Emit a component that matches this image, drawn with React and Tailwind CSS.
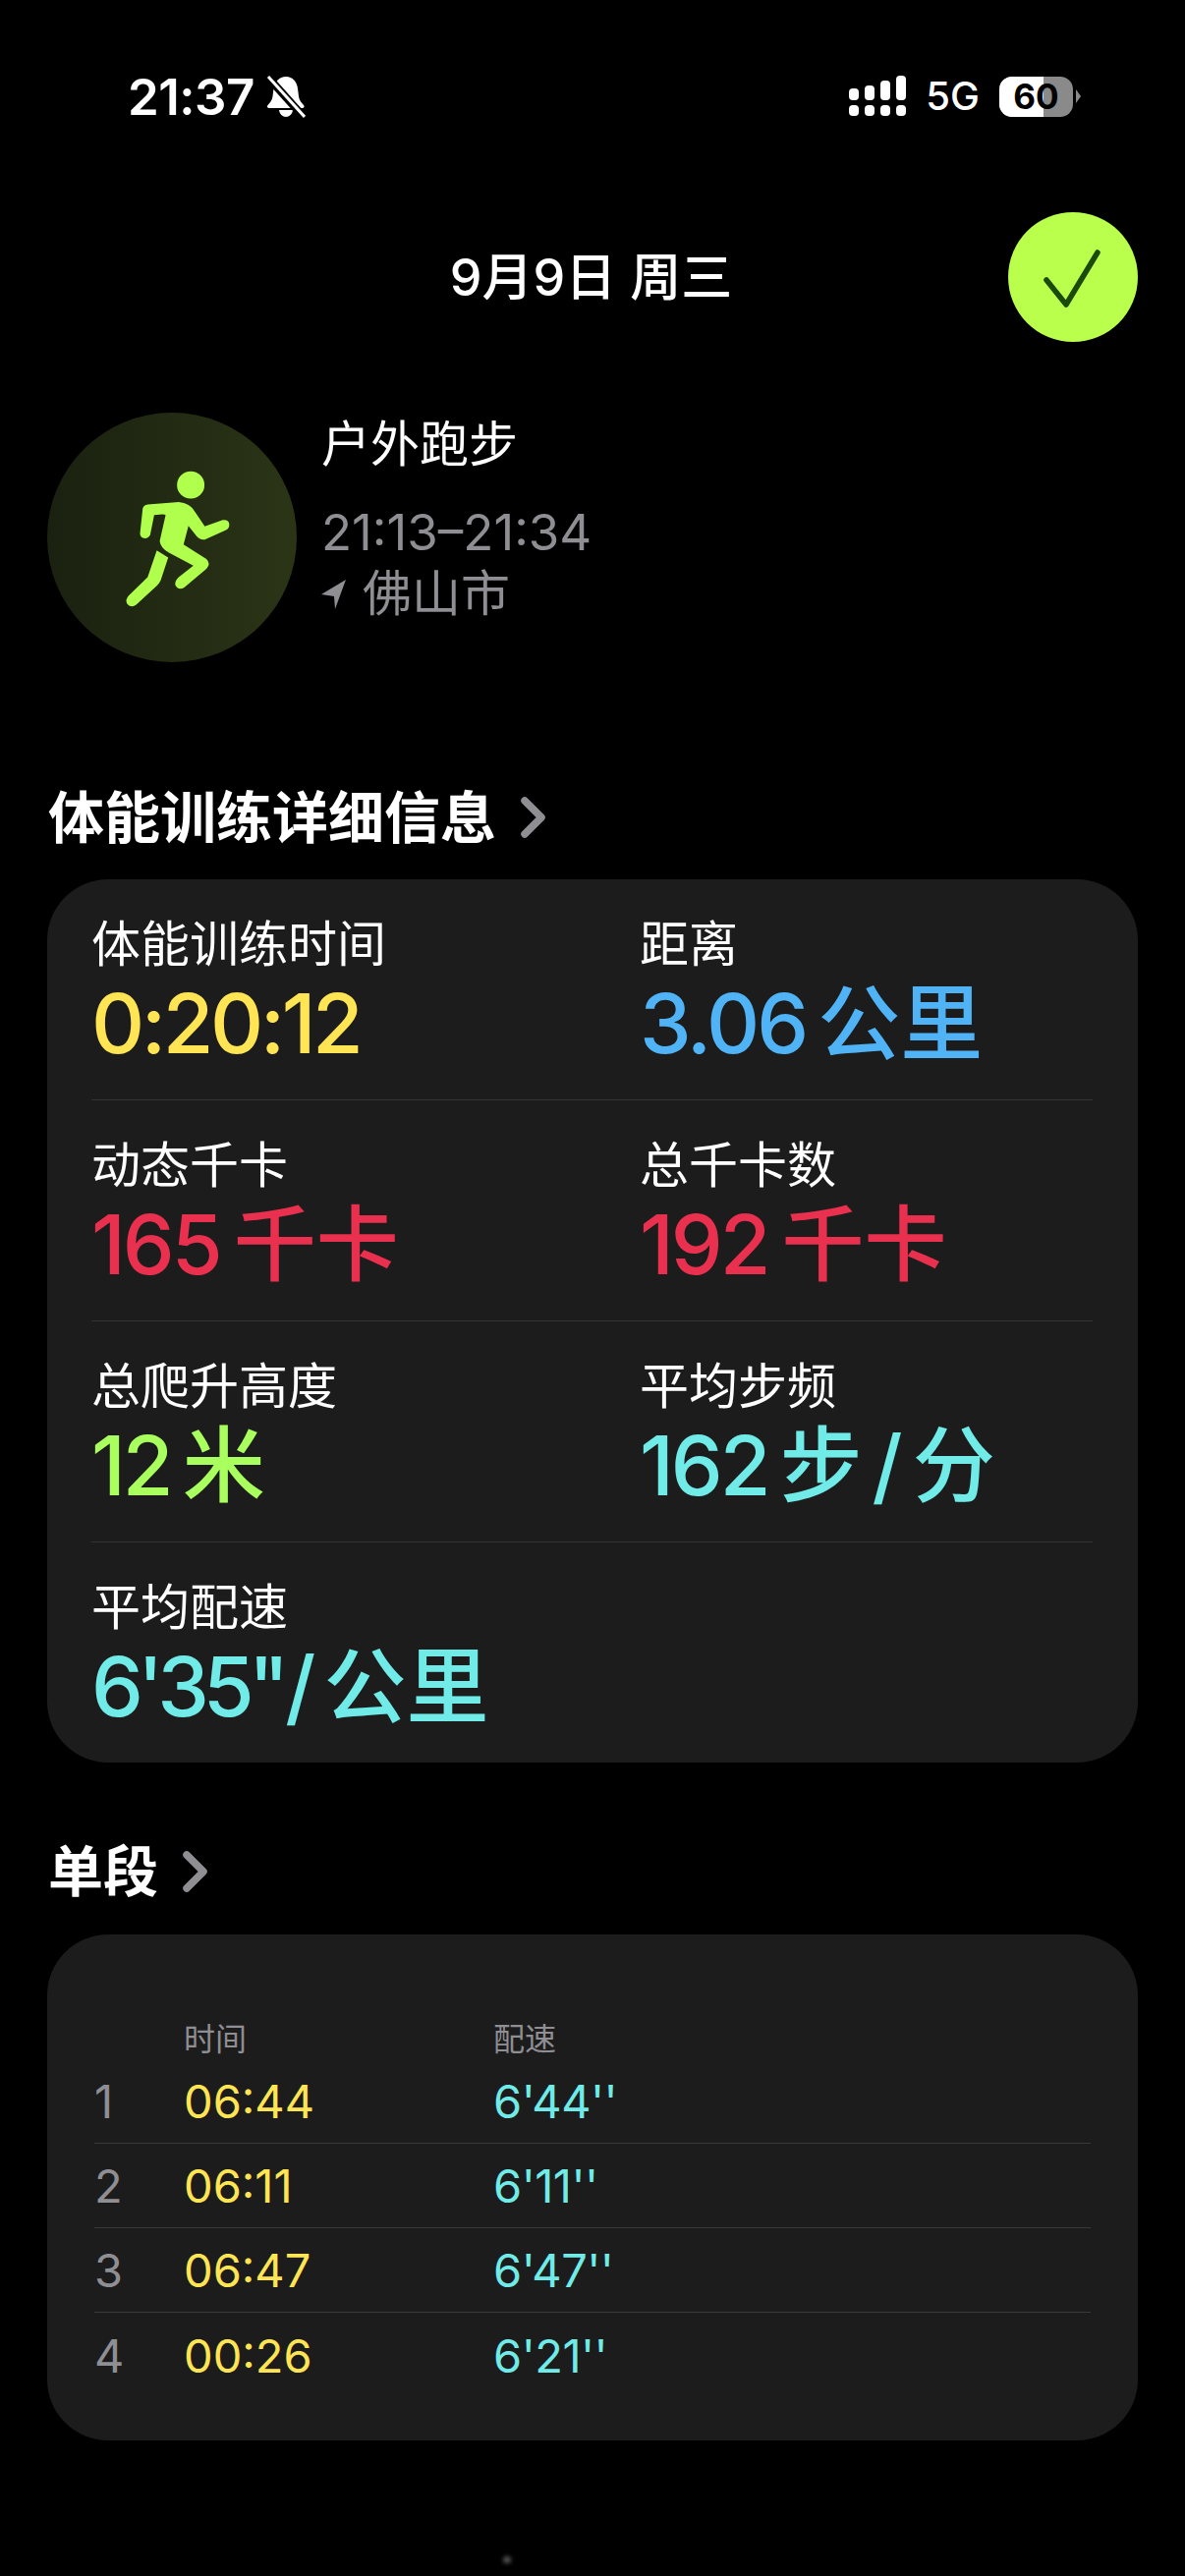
const METRICS = [
  [
    { label: "体能训练时间", color: "text-[#ffe454]", parts: [["0:20:12", "tracking-[-3.5px]"]] },
    { label: "距离", color: "text-[#4fb3f6]", parts: [["3.06", "tracking-[-3px] mr-[12px]"], ["公里", ""]] },
  ],
  [
    { label: "动态千卡", color: "text-[#e9304f]", parts: [["165", "tracking-[-3px] mr-[14px]"], ["千卡", ""]] },
    { label: "总千卡数", color: "text-[#e9304f]", parts: [["192", "tracking-[-3px] mr-[14px]"], ["千卡", ""]] },
  ],
  [
    { label: "总爬升高度", color: "text-[#a8ff5e]", parts: [["12", "tracking-[-3px] mr-[12px]"], ["米", ""]] },
    {
      label: "平均步频",
      color: "text-[#70ebe8]",
      parts: [["162", "tracking-[-3px] mr-[12px]"], ["步", "mr-[10px]"], ["/", "mr-[10px]"], ["分", ""]],
    },
  ],
  [
    {
      label: "平均配速",
      color: "text-[#70ebe8]",
      parts: [["6'35\"", "tracking-[-6px] mr-[2px]"], ["/", "mr-[8px]"], ["公里", ""]],
    },
  ],
];

const SPLITS = [
  ["1", "06:44", "6'44''"],
  ["2", "06:11", "6'11''"],
  ["3", "06:47", "6'47''"],
  ["4", "00:26", "6'21''"],
];

function SignalIcon() {
  return (
    <svg width="60" height="42" viewBox="0 0 60 42" fill="white">
      <rect x="0" y="13" width="10" height="12" rx="4" />
      <rect x="16" y="10" width="10" height="15" rx="4" />
      <rect x="32" y="5" width="10" height="20" rx="4" />
      <rect x="48" y="0" width="10" height="25" rx="4" />
      <rect x="0" y="30" width="10" height="11" rx="4" />
      <rect x="16" y="30" width="10" height="11" rx="4" />
      <rect x="32" y="30" width="10" height="11" rx="4" />
      <rect x="48" y="30" width="10" height="11" rx="4" />
    </svg>
  );
}

function MutedBell() {
  return (
    <svg width="40" height="43" viewBox="0 0 40 43">
      <path
        d="M20 1c7 0 11 5 12 12l1 8c.5 4 2.500 6 5 9 1.200 1.500.5 3-1.500 3H3c-2 0-2.700-1.500-1.500-3 2.500-3 4.500-5 5-9l1-8C9 6 13 1 20 1z"
        fill="white"
      />
      <path d="M13 35h14c-.5 4-3.500 7-7 7s-6.500-3-7-7z" fill="white" />
      <path d="M3 3l35 39" stroke="black" strokeWidth="8" />
      <path d="M2 1l37 41" stroke="white" strokeWidth="3" />
    </svg>
  );
}

function Battery() {
  return (
    <div className="flex items-center">
      <div className="relative w-[75px] h-[41px] rounded-[13px] overflow-hidden bg-[#8a8a8a] flex items-center justify-center">
        <div className="absolute left-0 top-0 bottom-0 w-[45px] bg-white" />
        <span className="relative text-[35px] font-bold text-black leading-none">60</span>
      </div>
      <svg className="ml-[3px]" width="5" height="14" viewBox="0 0 5 14">
        <path d="M0 0l5 7-5 7z" fill="#8a8a8a" />
      </svg>
    </div>
  );
}

function Runner() {
  return (
    <svg width="108" height="143" viewBox="80 70 325 430" fill="#b0ff4c">
      <circle cx="282" cy="123" r="42" />
      <path d="M150 183L245 175Q280 178 295 205L325 250L380 230Q400 228 400 245Q400 258 385 263L325 290Q310 292 300 280L275 248L260 305L330 350Q345 365 330 380L262 437Q245 447 235 430Q232 418 245 405L290 370L215 330Q190 318 187 295L205 215Q203 213 195 213L170 215L158 275Q150 290 135 285Q125 280 127 268L135 195Q138 185 150 183Z" />
      <path d="M178 323L213 345L190 415Q185 425 178 432L115 490Q100 500 88 488Q80 475 92 462L150 405Z" />
    </svg>
  );
}

function SectionTitle({ children, className }) {
  return (
    <div className={`flex items-center px-[49px] ${className}`}>
      <span className="font-bold text-white leading-none">{children}</span>
      <svg className="ml-[25px]" width="26" height="44" viewBox="0 0 26 44" fill="none">
        <path d="M4 5L21 22L4 39" stroke="#8e8e93" strokeWidth="7.500" strokeLinecap="round" strokeLinejoin="round" />
      </svg>
    </div>
  );
}

export default function App() {
  return (
    <div className="relative w-[1206px] h-[2622px] bg-black overflow-hidden font-['Inter','Noto_Sans_CJK_SC',sans-serif]">
      {/* status bar */}
      <div className="flex items-center h-[42px] mt-[77px] pl-[130px] pr-[106px] text-white">
        <span className="text-[51px] font-semibold leading-none tracking-[-0.5px]">21:37</span>
        <div className="ml-[12px]">
          <MutedBell />
        </div>
        <div className="ml-auto flex items-center">
          <SignalIcon />
          <span className="ml-[18px] text-[40px] font-medium leading-none">5G</span>
          <div className="ml-[20px]">
            <Battery />
          </div>
        </div>
      </div>

      {/* date + done */}
      <div className="relative flex justify-center items-center h-[132px] mt-[97px]">
        <span className="text-[52px] font-medium text-white leading-none mr-[3px] mt-[2px]">9月9日 周三</span>
        <div className="absolute right-[48px] top-0 w-[132px] h-[132px] rounded-full bg-[#b9ff4c] flex items-center justify-center">
          <svg width="70" height="70" viewBox="0 0 70 70" fill="none">
            <path d="M8 38L28 63L60 10" stroke="#1c4a0c" strokeWidth="5.500" strokeLinecap="round" strokeLinejoin="round" />
          </svg>
        </div>
      </div>

      {/* workout summary */}
      <div className="flex mt-[72px] pl-[48px]">
        <div className="w-[254px] h-[254px] pl-[11px] rounded-full bg-gradient-to-r from-[#1a2110] to-[#2b3516] flex items-center justify-center">
          <Runner />
        </div>
        <div className="ml-[25px] text-[50px] leading-none">
          <div className="text-white mt-[7px] h-[60px]">户外跑步</div>
          <div className="text-[#8e8e93] text-[51px] mt-[29px] h-[58px]">21:13–21:34</div>
          <div className="text-[#8e8e93] flex items-center h-[60px]">
            <svg width="26" height="32" viewBox="0 0 26 32" fill="#8e8e93">
              <path d="M25 2L0 17L13 19L14 32z" />
            </svg>
            <span className="ml-[16px]">佛山市</span>
          </div>
        </div>
      </div>

      <SectionTitle className="mt-[123px] h-[70px] text-[57px]">体能训练详细信息</SectionTitle>

      {/* metrics card */}
      <div className="mx-[48px] mt-[28px] h-[899px] rounded-[62px] bg-[#1c1c1c] pl-[45px] pr-[46px]">
        {METRICS.map((row, i) => (
          <div
            key={i}
            className={`grid grid-cols-[558px_1fr] h-[225px] pt-[36px] ${i < 3 ? "border-b border-[#333335]" : ""}`}
          >
            {row.map((m) => (
              <div key={m.label}>
                <div className="text-[50px] text-white leading-[60px]">{m.label}</div>
                <div className={`text-[84px] font-medium leading-[84px] mt-[9px] whitespace-nowrap ${m.color}`}>
                  {m.parts.map(([text, spacing], j) => (
                    <span key={j} className={spacing}>
                      {text}
                    </span>
                  ))}
                </div>
              </div>
            ))}
          </div>
        ))}
      </div>

      <SectionTitle className="mt-[76px] h-[70px] text-[56px]">单段</SectionTitle>

      {/* splits card */}
      <div className="mx-[48px] mt-[29px] h-[515px] rounded-[62px] bg-[#1c1c1c] pl-[48px] pr-[48px] pt-[87px]">
        <div className="grid grid-cols-[91px_315px_1fr] h-[40px] items-center text-[32px] text-[#8e8e93] leading-none">
          <span />
          <span>时间</span>
          <span>配速</span>
        </div>
        {SPLITS.map(([n, time, pace], i) => (
          <div
            key={n}
            className={`grid grid-cols-[91px_315px_1fr] h-[86px] items-center text-[47px] leading-none ${i < 3 ? "border-b border-[#39393b]" : ""}`}
          >
            <span className="text-[#8e8e93]">{n}</span>
            <span className="text-[#ffe454]">{time}</span>
            <span className="text-[#70ebe8] tracking-[-0.5px]">{pace}</span>
          </div>
        ))}
      </div>

      {/* faint speck by the home indicator */}
      <div className="absolute left-[512px] top-[2602px] w-[8px] h-[7px] rounded-full bg-[#555555] blur-[2px]" />
    </div>
  );
}
